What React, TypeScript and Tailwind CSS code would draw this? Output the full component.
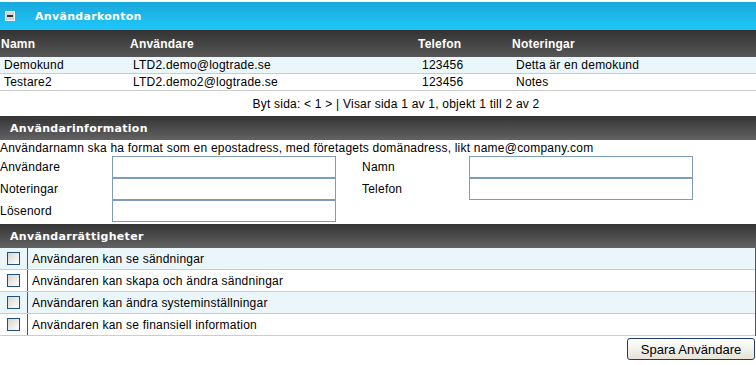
const body = "font-['Liberation_Sans',Arial,sans-serif] text-[12px] tracking-[0.22px] text-black";
const title = "font-['DejaVu_Sans',Verdana,sans-serif] font-bold text-[11px] tracking-[0.3px] text-white";

const users = [
  { name: "Demokund", user: "LTD2.demo@logtrade.se", phone: "123456", notes: "Detta är en demokund" },
  { name: "Testare2", user: "LTD2.demo2@logtrade.se", phone: "123456", notes: "Notes" },
];

const rights = [
  "Användaren kan se sändningar",
  "Användaren kan skapa och ändra sändningar",
  "Användaren kan ändra systeminställningar",
  "Användaren kan se finansiell information",
];

function DarkBand({ children }: { children: React.ReactNode }) {
  return (
    <div className={`flex h-[24px] items-center bg-linear-to-b from-[#343434] to-[#636363] pl-[10px] ${title}`}>
      {children}
    </div>
  );
}

function Field({ label }: { label: string }) {
  return (
    <>
      <div className="flex h-[22px] items-center">{label}</div>
      <input className="block h-[22px] w-[224px] border border-[#7f9db9] bg-white outline-none" />
    </>
  );
}

export default function App() {
  return (
    <div className={`w-[756px] bg-white pt-[2px] leading-none ${body}`}>
      <div className="flex h-[28px] items-center bg-linear-to-b from-[#19a8dd] to-[#1fc8f9]">
        <div className="ml-[5px] flex h-[10px] w-[10px] items-center justify-center border border-[#eef6fa] bg-[#d4d4d4]">
          <div className="h-[2px] w-[6px] bg-[#333]" />
        </div>
        <span className={`ml-[20px] ${title}`}>Användarkonton</span>
      </div>

      <div className="grid grid-cols-[130px_288px_94px_1fr]">
        <div className="contents font-bold text-white">
          {["Namn", "Användare", "Telefon", "Noteringar"].map((h, i) => (
            <div
              key={h}
              className={`flex h-[27px] items-center bg-linear-to-b from-[#333333] to-[#575757] ${i === 0 ? "pl-[1px]" : ""}`}
            >
              {h}
            </div>
          ))}
        </div>
        {users.map((u, i) => (
          <div key={u.name} className={`contents ${i === 0 ? "[&>div]:bg-[#eaf6f9]" : "[&>div]:bg-white"}`}>
            <div className="flex h-[17px] items-center border-b border-[#cccccc] pl-[4px]">{u.name}</div>
            <div className="flex h-[17px] items-center border-b border-[#cccccc] pl-[3px]">{u.user}</div>
            <div className="flex h-[17px] items-center border-b border-[#cccccc] pl-[4px]">{u.phone}</div>
            <div className="flex h-[17px] items-center border-b border-[#cccccc] pl-[4px]">{u.notes}</div>
          </div>
        ))}
      </div>

      <div className="flex h-[25px] items-center justify-center pl-[36px]">
        Byt sida: &lt; 1 &gt; | Visar sida 1 av 1, objekt 1 till 2 av 2
      </div>

      <DarkBand>Användarinformation</DarkBand>

      <div className="flex h-[16px] items-center">
        Användarnamn ska ha format som en epostadress, med företagets domänadress, likt name@company.com
      </div>
      <div className="grid grid-cols-[112px_224px_26px_107px_224px] pb-[2px]">
        <Field label="Användare" />
        <div />
        <Field label="Namn" />
        <Field label="Noteringar" />
        <div />
        <Field label="Telefon" />
        <Field label="Lösenord" />
      </div>

      <DarkBand>Användarrättigheter</DarkBand>

      <div className="border-r border-[#555555]">
        {rights.map((r, i) => (
          <div
            key={r}
            className={`flex h-[22px] border-b border-[#cccccc] ${i % 2 === 0 ? "bg-[#eaf6f9]" : "bg-white"}`}
          >
            <div className="flex w-[28px] items-center border-r border-[#555555] pl-[7px]">
              <div className="h-[13px] w-[13px] border border-[#1c5180] bg-linear-to-br from-[#d6d6d0] to-white" />
            </div>
            <div className="flex items-center pl-[4px]">{r}</div>
          </div>
        ))}
      </div>

      <div className="flex justify-end pr-[1px] pt-[2px]">
        <button className="block h-[22px] w-[128px] rounded-[3px] border border-[#1c3f6e] bg-linear-to-b from-white to-[#e6e3d6] text-[13px] tracking-normal">
          Spara Användare
        </button>
      </div>
    </div>
  );
}
